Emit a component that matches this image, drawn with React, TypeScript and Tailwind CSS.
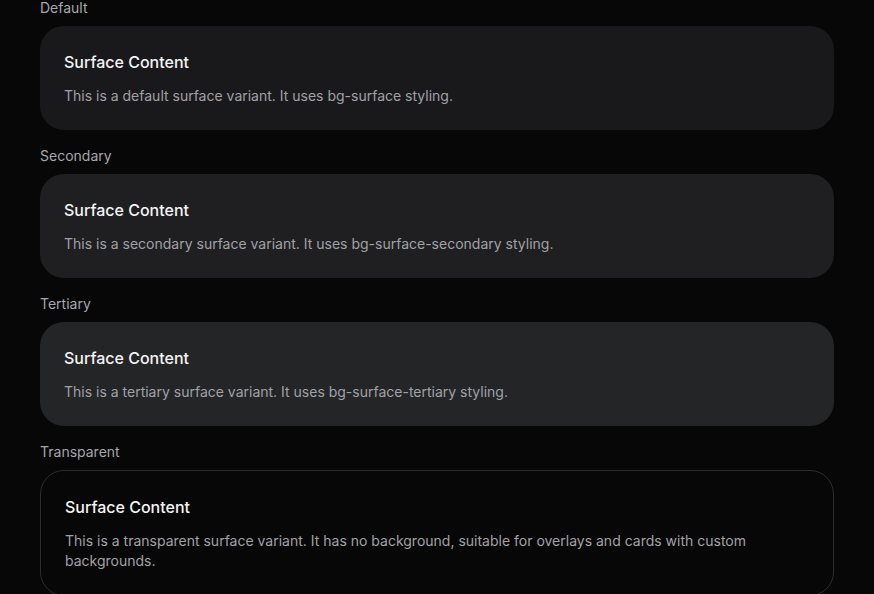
import React from "react";

const variants = [
  { label: "Default", cls: "bg-[#19191b]", desc: "This is a default surface variant. It uses bg-surface styling." },
  { label: "Secondary", cls: "bg-[#1f1f21]", desc: "This is a secondary surface variant. It uses bg-surface-secondary styling." },
  { label: "Tertiary", cls: "bg-[#242527]", desc: "This is a tertiary surface variant. It uses bg-surface-tertiary styling." },
  {
    label: "Transparent",
    cls: "border border-[#2c2c2f]",
    desc: "This is a transparent surface variant. It has no background, suitable for overlays and cards with custom backgrounds.",
  },
];

export default function App() {
  return (
    <div className="min-h-screen bg-[#070707] overflow-hidden" style={{ fontFamily: "Inter, 'Noto Sans', sans-serif" }}>
      <div className="-mt-[2px] px-10 flex flex-col gap-4">
        {variants.map((v) => (
          <div key={v.label} className="flex flex-col gap-2">
            <div className="text-sm leading-5 text-[#a6a6ab]">{v.label}</div>
            <div className={`rounded-3xl p-6 flex flex-col gap-3 ${v.cls}`}>
              <div className="text-base leading-6 font-medium text-[#f4f4f5]">Surface Content</div>
              <div className="text-sm leading-5 text-[#a1a1a6]">{v.desc}</div>
            </div>
          </div>
        ))}
      </div>
    </div>
  );
}
